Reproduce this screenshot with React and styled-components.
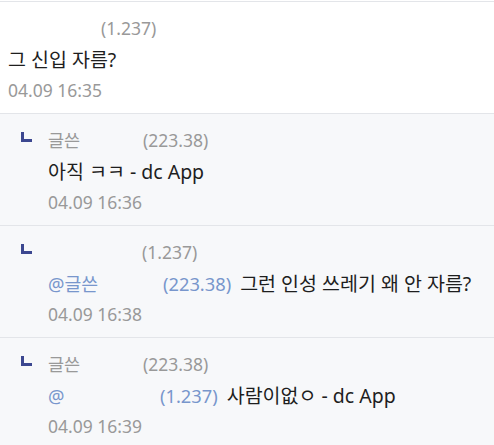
import React from "react";
import styled, { createGlobalStyle } from "styled-components";

const Global = createGlobalStyle`
  html, body { margin: 0; padding: 0; background: #fff; }
  body { font-family: "Noto Sans", "Noto Sans CJK KR", sans-serif; }
`;

const List = styled.ul`
  list-style: none;
  margin: 0;
  padding: 1px 0 0;
  width: 494px;
`;

const Item = styled.li`
  border-top: 1px solid #e3e5e9;
  background: ${(p) => (p.$reply ? "#f7f8fa" : "#fff")};
  padding: 11px 0 7px ${(p) => (p.$reply ? "21px" : "8px")};
  display: grid;
  grid-template-columns: ${(p) => (p.$reply ? "27px 1fr" : "1fr")};
`;

const ReplyMark = styled.svg`
  width: 11px;
  height: 10px;
  margin-top: 7px;
  display: block;
`;

const Body = styled.div`
  display: flex;
  flex-direction: column;
`;

const Line = styled.div`
  line-height: 31px;
  height: 31px;
  font-size: ${(p) => p.$size || 19.5}px;
  color: ${(p) => p.$color || "#1e1e1e"};
  white-space: nowrap;
`;

const Nick = styled.span`
  color: #999;
  display: inline-block;
  min-width: ${(p) => p.$w}px;
`;

const Ip = styled.span`
  color: #999;
`;

const Mention = styled.span`
  color: #7896cc;
  font-size: 18.3px;
  margin-right: 9px;
`;

const MentionNick = styled.span`
  display: inline-block;
  min-width: ${(p) => p.$w}px;
`;

const Mark = () => (
  <ReplyMark viewBox="0 0 11 10">
    <path d="M0 0h3v7h8v3H0z" fill="#3c4790" />
  </ReplyMark>
);

const comments = [
  { reply: false, nick: "", nickW: 93, ip: "(1.237)", text: "그 신입 자름?", date: "04.09 16:35" },
  { reply: true, nick: "글쓴", nickW: 95, ip: "(223.38)", text: "아직 ㅋㅋ - dc App", date: "04.09 16:36" },
  {
    reply: true,
    nick: "",
    nickW: 94,
    ip: "(1.237)",
    mention: { nick: "@글쓴", w: 115, ip: "(223.38)" },
    text: "그런 인성 쓰레기 왜 안 자름?",
    date: "04.09 16:38",
  },
  {
    reply: true,
    nick: "글쓴",
    nickW: 95,
    ip: "(223.38)",
    mention: { nick: "@", w: 112, ip: "(1.237)" },
    text: "사람이없ㅇ - dc App",
    date: "04.09 16:39",
  },
];

export default function App() {
  return (
    <>
      <Global />
      <List>
        {comments.map((c, i) => (
          <Item key={i} $reply={c.reply}>
            {c.reply && <Mark />}
            <Body>
              <Line $size={17.5}>
                <Nick $w={c.nickW}>{c.nick}</Nick>
                <Ip>{c.ip}</Ip>
              </Line>
              <Line>
                {c.mention && (
                  <Mention>
                    <MentionNick $w={c.mention.w}>{c.mention.nick}</MentionNick>
                    {c.mention.ip}
                  </Mention>
                )}
                {c.text}
              </Line>
              <Line $size={17.5} $color="#999">
                {c.date}
              </Line>
            </Body>
          </Item>
        ))}
      </List>
    </>
  );
}
